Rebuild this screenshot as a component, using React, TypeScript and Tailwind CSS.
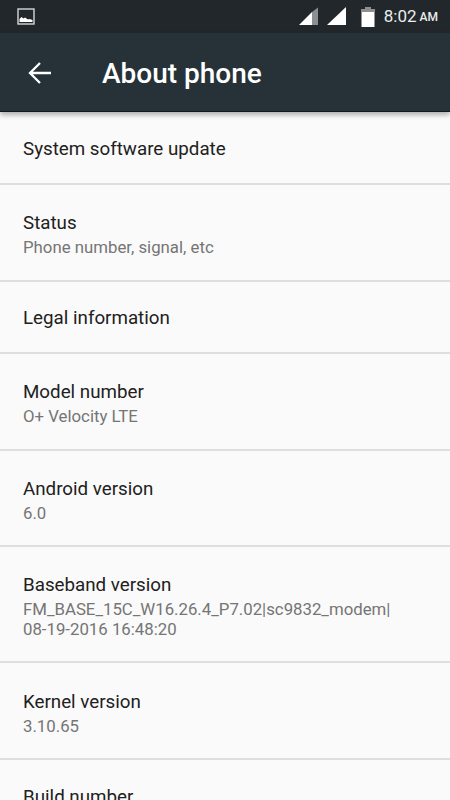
const items = [
  { title: "System software update", h: "h-[73px]" },
  { title: "Status", sub: ["Phone number, signal, etc"], h: "h-[96.600px]" },
  { title: "Legal information", h: "h-[72.500px]" },
  { title: "Model number", sub: ["O+ Velocity LTE"], h: "h-[96.600px]" },
  { title: "Android version", sub: ["6.0"], h: "h-[96.600px]" },
  { title: "Baseband version", sub: ["FM_BASE_15C_W16.26.4_P7.02|sc9832_modem|", "08-19-2016 16:48:20"], h: "h-[116px]" },
  { title: "Kernel version", sub: ["3.10.65"], h: "h-[96.600px]" },
];

export default function App() {
  return (
    <div className="h-[800px] w-[450px] overflow-hidden bg-[#fafafa] font-['Roboto',sans-serif]">
      <div className="flex h-[33px] items-center justify-between bg-[#21272b] pl-[17px] pr-[12px]">
        <svg width="18" height="18" viewBox="0 0 18 18">
          <rect x="1" y="1" width="16" height="15" fill="none" stroke="#d5d7d8" strokeWidth="1.4" />
          <path d="M2.500 14v-3l2-2 2 1.500 1.500-1 3 2 1.500-.5 3 1v2z" fill="#fff" />
        </svg>
        <div className="flex items-center">
          <svg width="21" height="19" viewBox="0 0 21 19" className="mr-[8px]">
            <path d="M1 18 14 5v13z" fill="#fff" />
            <path d="M14 5l6-4.500V18h-6z" fill="#8b8f91" />
          </svg>
          <svg width="20" height="19" viewBox="0 0 20 19" className="mr-[14px]">
            <path d="M0 18 19 0v18z" fill="#fff" />
          </svg>
          <svg width="14" height="20" viewBox="0 0 14 20" className="mr-[9px]">
            <path d="M4.500 0h5v2h4v18H.5V2h4z" fill="#fff" />
            <path d="M4.500 0h5v2h4v3H.5V2h4z" fill="#8b8f91" />
          </svg>
          <span className="text-[17px] text-[#eceded]">8:02</span>
          <span className="ml-[3px] text-[12px] font-medium text-[#eceded]">AM</span>
        </div>
      </div>
      <div className="flex h-[79px] items-center border-b border-[#14191c] bg-[#263238] shadow-[0_3px_5px_rgba(0,0,0,0.3)] pl-[28px]">
        <svg width="24" height="22" viewBox="0 0 24 22" fill="none" stroke="#fff" strokeWidth="2.300" className="mt-[2px]">
          <path d="M23 11H2M12 1 2 11l10 10" />
        </svg>
        <span className="ml-[50px] mt-[3px] text-[28px] font-medium text-white">About phone</span>
      </div>
      <div>
        {items.map((item) => (
          <div key={item.title} className={`${item.h} flex flex-col justify-center border-b-2 border-[#dedede] pl-[23px] pt-[4px]`}>
            <div className="text-[18.750px] leading-[25px] text-[#212121]">{item.title}</div>
            {item.sub?.map((line, i) => (
              <div key={line} className={i === 0 ? "mt-[1px] text-[16.800px] leading-[20px] text-[#757575]" : "text-[16.800px] leading-[20px] text-[#757575]"}>{line}</div>
            ))}
          </div>
        ))}
        <div className="pl-[23px] pt-[25px] text-[18.750px] leading-[25px] text-[#212121]">Build number</div>
      </div>
    </div>
  );
}
